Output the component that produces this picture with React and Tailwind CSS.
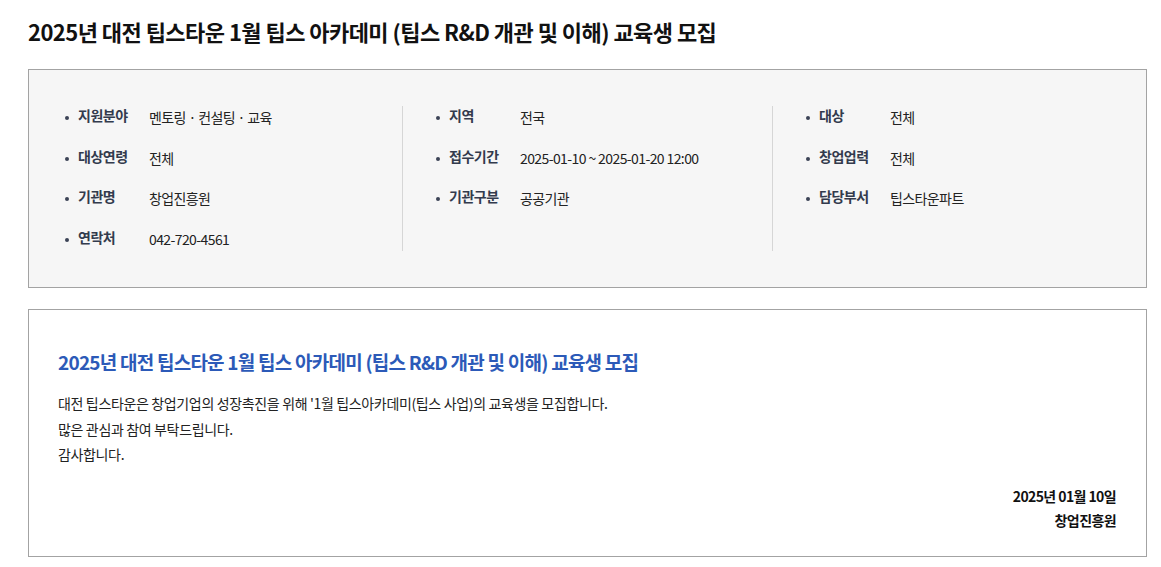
const FONT = { fontFamily: '"Noto Sans CJK KR", "Noto Sans", sans-serif' }

const COLUMNS = [
  [
    ['지원분야', '멘토링 · 컨설팅 · 교육'],
    ['대상연령', '전체'],
    ['기관명', '창업진흥원'],
    ['연락처', '042-720-4561'],
  ],
  [
    ['지역', '전국'],
    ['접수기간', '2025-01-10 ~ 2025-01-20 12:00'],
    ['기관구분', '공공기관'],
  ],
  [
    ['대상', '전체'],
    ['창업업력', '전체'],
    ['담당부서', '팁스타운파트'],
  ],
]

function InfoRow({ label, value }) {
  return (
    <li className="flex items-start h-[40.7px]">
      <span className="w-[4px] h-[4px] rounded-full bg-[#3b4356] mt-[10px] mr-[9px] shrink-0" />
      <span className="w-[71px] shrink-0 text-[14px] font-bold text-[#333b4d] leading-[22px] -mt-[2px] tracking-[-0.5px]">{label}</span>
      <span className="text-[14px] text-[#222] leading-[22px] tracking-[-0.6px]">{value}</span>
    </li>
  )
}

export default function App() {
  return (
    <div className="bg-white w-[1161px] h-[567px] px-[28px] pt-[16px]" style={FONT}>
      <h1 className="text-[22px] font-bold text-[#111] leading-[30px] tracking-[-0.55px]">
        2025년 대전 팁스타운 1월 팁스 아카데미 (팁스 R&amp;D 개관 및 이해) 교육생 모집
      </h1>

      <div className="mt-[23px] w-[1119px] h-[219px] border border-[#a3a3a3] bg-[#f6f6f6] pl-[3px] pt-[36px]">
        <div className="flex">
          {COLUMNS.map((col, i) => (
            <ul
              key={i}
              className={`w-[370px] h-[145px] pl-[33px] ${i > 0 ? 'border-l border-[#d6d6d6]' : ''}`}
            >
              {col.map(([l, v]) => <InfoRow key={l} label={l} value={v} />)}
            </ul>
          ))}
        </div>
      </div>

      <div className="mt-[21px] w-[1119px] h-[248px] border border-[#a3a3a3] bg-white pl-[29px] pr-[30px] pt-[37px]">
        <h2 className="text-[19px] font-bold text-[#2c5ab8] leading-[30px] tracking-[-0.77px]">
          2025년 대전 팁스타운 1월 팁스 아카데미 (팁스 R&amp;D 개관 및 이해) 교육생 모집
        </h2>
        <div className="mt-[14px] text-[14px] text-[#222] leading-[25.5px] tracking-[-0.35px]">
          <p>대전 팁스타운은 창업기업의 성장촉진을 위해 '1월 팁스아카데미(팁스 사업)의 교육생을 모집합니다.</p>
          <p>많은 관심과 참여 부탁드립니다.</p>
          <p>감사합니다.</p>
        </div>
        <div className="mt-[16px] text-right text-[14px] font-bold text-[#111] leading-[24px] tracking-[-0.6px]">
          <p>2025년 01월 10일</p>
          <p>창업진흥원</p>
        </div>
      </div>
    </div>
  )
}
